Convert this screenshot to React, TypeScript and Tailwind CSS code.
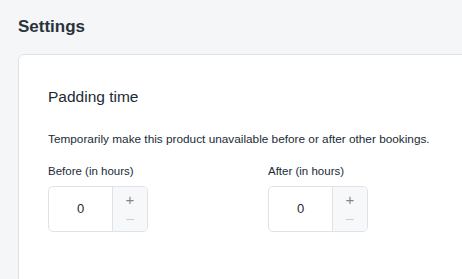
import React from "react";

function Stepper({ label }: { label: string }) {
  return (
    <div className="w-[220px]">
      <div className="text-[11.5px] leading-[14px] text-[#212b36]">{label}</div>
      <div className="mt-[8px] flex h-[46px] w-[100px] overflow-hidden rounded-[5px] border border-[#dfe3e8] bg-white">
        <div className="flex w-[64px] items-center justify-center border-r border-[#dfe3e8] text-[13px] text-[#212b36]">
          0
        </div>
        <div className="flex flex-1 flex-col bg-[#f7f8f9]">
          <div className="flex flex-1 items-center justify-center pt-[2px] text-[15px] leading-none text-[#7f8890]">+</div>
          <div className="flex flex-1 items-center justify-center pb-[2px]">
            <div className="h-[1px] w-[8px] bg-[#c4cdd5]" />
          </div>
        </div>
      </div>
    </div>
  );
}

export default function App() {
  return (
    <div
      className="h-[279px] w-[462px] overflow-hidden bg-[#f4f6f8]"
      style={{ fontFamily: '"Liberation Sans", Arial, sans-serif' }}
    >
      <div className="pl-[18px] pt-[17px]">
        <div className="text-[17px] font-bold leading-[20px] text-[#2a333c]">Settings</div>
        <div className="mt-[17px] h-[260px] w-[480px] rounded-tl-[6px] border border-[#dfe3e8] bg-white pl-[29px] pt-[32px]">
          <div className="text-[15.5px] leading-[20px] text-[#212b36]">Padding time</div>
          <div className="mt-[25px] text-[11.8px] leading-[14px] text-[#212b36]">
            Temporarily make this product unavailable before or after other bookings.
          </div>
          <div className="mt-[18px] flex">
            <Stepper label="Before (in hours)" />
            <Stepper label="After (in hours)" />
          </div>
        </div>
      </div>
    </div>
  );
}
